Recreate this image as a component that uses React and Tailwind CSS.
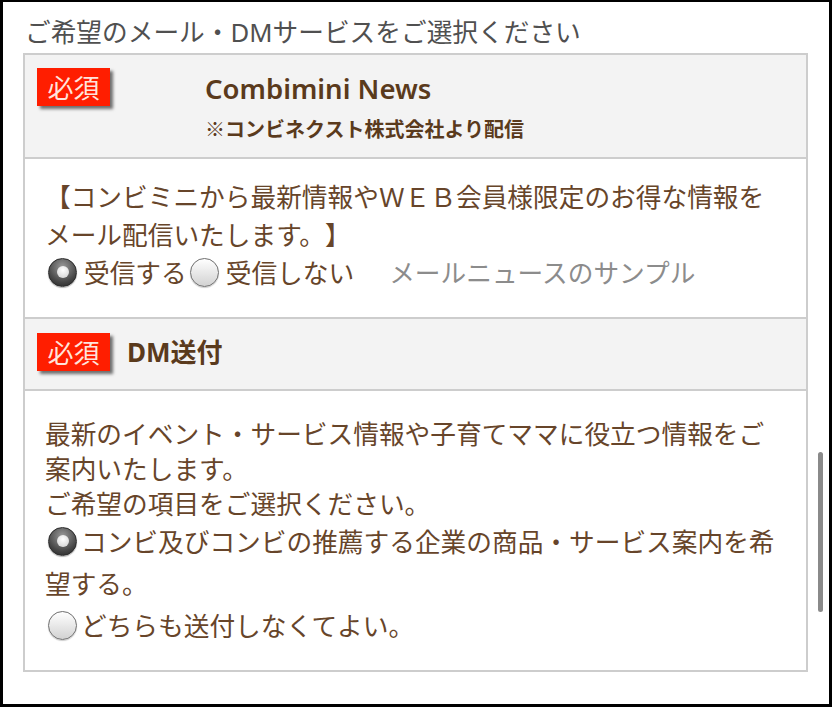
import React from "react";

function Badge() {
  return (
    <div className="w-[73px] h-[38px] shrink-0 bg-[#ff1e00] shadow-[3px_3px_3px_rgba(0,0,0,0.55)] flex items-center justify-center text-[#ffe4dc] text-[26px] leading-none font-['Noto_Sans_CJK_JP',sans-serif]">
      必須
    </div>
  );
}

function RadioOn() {
  return (
    <span className="flex shrink-0 w-[29px] h-[29px] rounded-full border border-[#2a2a2a] bg-[radial-gradient(circle_at_50%_30%,#9a9a9a,#454545_65%,#222222)] items-center justify-center shadow-[0_1px_1px_rgba(0,0,0,0.3)]">
      <span className="w-[12px] h-[12px] rounded-full bg-[radial-gradient(circle_at_50%_35%,#ffffff,#cfcfcf)]" />
    </span>
  );
}

function RadioOff() {
  return (
    <span className="flex shrink-0 w-[29px] h-[29px] rounded-full border border-[#6e6e6e] bg-[linear-gradient(#ffffff,#d2d2d2)] shadow-[0_1px_1px_rgba(0,0,0,0.2)]" />
  );
}

export default function App() {
  return (
    <div className="relative w-[832px] h-[707px] bg-white border-l-[3px] border-t-2 border-r-[3px] border-b-[3px] border-black overflow-hidden font-['Noto_Sans_CJK_JP',sans-serif] [text-spacing-trim:space-all]">
      <div className="px-[20px] pt-[13px]">
        <div className="pl-[2px] text-[25.7px] leading-[36px] text-[#505050] whitespace-nowrap font-['Noto_Sans','Noto_Sans_CJK_JP',sans-serif]">
          ご希望のメール・DMサービスをご選択ください
        </div>
        <div className="mt-[2px] border-2 border-[#cdcdcd] w-[785px]">
          {/* Header 1 */}
          <div className="h-[102px] bg-[#f3f3f3] flex items-start pl-[12px] pt-[13px]">
            <Badge />
            <div className="ml-[95px] pt-[3px] text-[#5a3a1c]">
              <div className="text-[27.5px] leading-[36px] font-semibold font-['Noto_Sans','Noto_Sans_CJK_JP',sans-serif] whitespace-nowrap">
                Combimini News
              </div>
              <div className="mt-[7px] text-[20px] leading-[30px] font-bold whitespace-nowrap">
                ※コンビネクスト株式会社より配信
              </div>
            </div>
          </div>
          {/* Body 1 */}
          <div className="border-t-2 border-[#cdcdcd] pl-[20px] pt-[18px] pb-[26px] text-[25.7px] text-[#67452a] whitespace-nowrap">
            <div className="leading-[38px]">【コンビミニから最新情報やＷＥＢ会員様限定のお得な情報を</div>
            <div className="leading-[38px]">メール配信いたします。】</div>
            <div className="h-[38px] flex items-center leading-[38px]">
              <span className="ml-[3px] mr-[7px]"><RadioOn /></span>
              <span>受信する</span>
              <span className="ml-[3px] mr-[7px]"><RadioOff /></span>
              <span>受信しない</span>
              <span className="ml-[35px] text-[#8c8c8c]">メールニュースのサンプル</span>
            </div>
          </div>
          {/* Header 2 */}
          <div className="border-t-2 border-[#cdcdcd] h-[72px] bg-[#f3f3f3] flex items-start pl-[12px] pt-[14px]">
            <Badge />
            <div className="ml-[17px] h-[38px] flex items-center text-[26px] font-bold text-[#5a3a1c] font-['Noto_Sans','Noto_Sans_CJK_JP',sans-serif] whitespace-nowrap">
              DM送付
            </div>
          </div>
          {/* Body 2 */}
          <div className="border-t-2 border-[#cdcdcd] pl-[20px] pt-[24px] pb-[24px] text-[25.7px] text-[#67452a] whitespace-nowrap">
            <div className="leading-[35px]">最新のイベント・サービス情報や子育てママに役立つ情報をご</div>
            <div className="leading-[35px]">案内いたします。</div>
            <div className="leading-[35px]">ご希望の項目をご選択ください。</div>
            <div className="h-[42px] flex items-center leading-[42px]">
              <span className="ml-[3px] mr-[4px]"><RadioOn /></span>
              <span>コンビ及びコンビの推薦する企業の商品・サービス案内を希</span>
            </div>
            <div className="leading-[42px]">望する。</div>
            <div className="h-[42px] flex items-center leading-[42px]">
              <span className="ml-[3px] mr-[4px]"><RadioOff /></span>
              <span>どちらも送付しなくてよい。</span>
            </div>
          </div>
        </div>
      </div>
      <div className="absolute left-[815px] top-[450px] w-[5px] h-[160px] rounded-full bg-[#8a8a8a]" />
    </div>
  );
}
